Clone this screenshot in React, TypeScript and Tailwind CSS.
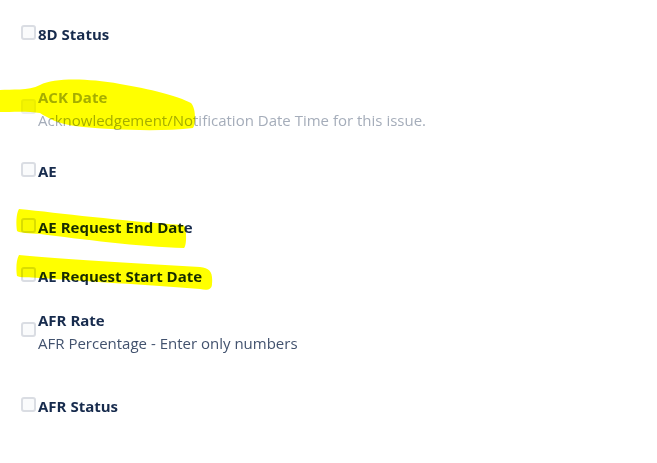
import React from "react";

type Item = {
  title: string;
  desc?: string;
  disabled?: boolean;
  mt: string;
};

function Box({ disabled }: { disabled?: boolean }) {
  return (
    <span
      className={
        "block shrink-0 w-[15px] h-[15px] rounded-[3px] border-2 mr-[2px] mb-[4px] " +
        (disabled ? "border-[#eceef1] bg-[#f4f5f7]" : "border-[#dadde3] bg-[#fafbfc]")
      }
    />
  );
}

function Row({ title, desc, disabled, mt }: Item) {
  return (
    <div className={"flex items-center pl-[21px] " + mt}>
      <Box disabled={disabled} />
      <div className="flex flex-col">
        <span
          className={
            "text-[15px] leading-[20px] font-bold " +
            (disabled ? "text-[#a5adba]" : "text-[#172b4d]")
          }
        >
          {title}
        </span>
        {desc && (
          <span
            className={
              "text-[15px] leading-[20px] mt-[3px] " +
              (disabled ? "text-[#a5adba]" : "text-[#42526e]")
            }
          >
            {desc}
          </span>
        )}
      </div>
    </div>
  );
}

export default function App() {
  return (
    <div
      className="relative w-[657px] h-[463px] bg-white overflow-hidden pt-[24px]"
      style={{ fontFamily: '"Open Sans", "Noto Sans", sans-serif' }}
    >
      <Row title="8D Status" mt="mt-0" />
      <Row
        title="ACK Date"
        desc="Acknowledgement/Notification Date Time for this issue."
        disabled
        mt="mt-[43px]"
      />
      <Row title="AE" mt="mt-[31px]" />
      <Row title="AE Request End Date" mt="mt-[36px]" />
      <Row title="AE Request Start Date" mt="mt-[29px]" />
      <Row title="AFR Rate" desc="AFR Percentage - Enter only numbers" mt="mt-[24px]" />
      <Row title="AFR Status" mt="mt-[43px]" />

      <svg
        className="absolute inset-0 pointer-events-none mix-blend-multiply"
        width="657"
        height="463"
        viewBox="0 0 657 463"
      >
        <path
          fill="#ffff00"
          d="M0,90 C12,89 28,91 40,85 C55,78 85,78 120,84 C150,89 178,96 191,103 C196,108 196,124 193,128 C160,132 110,130 75,126 C58,124 48,118 40,113 C28,111 12,112 0,112 Z"
        />
        <path
          fill="#ffff00"
          d="M19,209 C60,213 120,221 183,225 C187,226 187,246 184,248 C140,247 80,239 40,234 C28,233 20,233 17,231 C16,224 16,214 19,209 Z"
        />
        <path
          fill="#ffff00"
          d="M19,255 C60,259 130,263 200,267 C210,268 213,272 212,284 C212,289 208,291 200,289 C150,285 80,281 40,278 C28,277 20,278 17,276 C16,270 16,260 19,255 Z"
        />
      </svg>
    </div>
  );
}
